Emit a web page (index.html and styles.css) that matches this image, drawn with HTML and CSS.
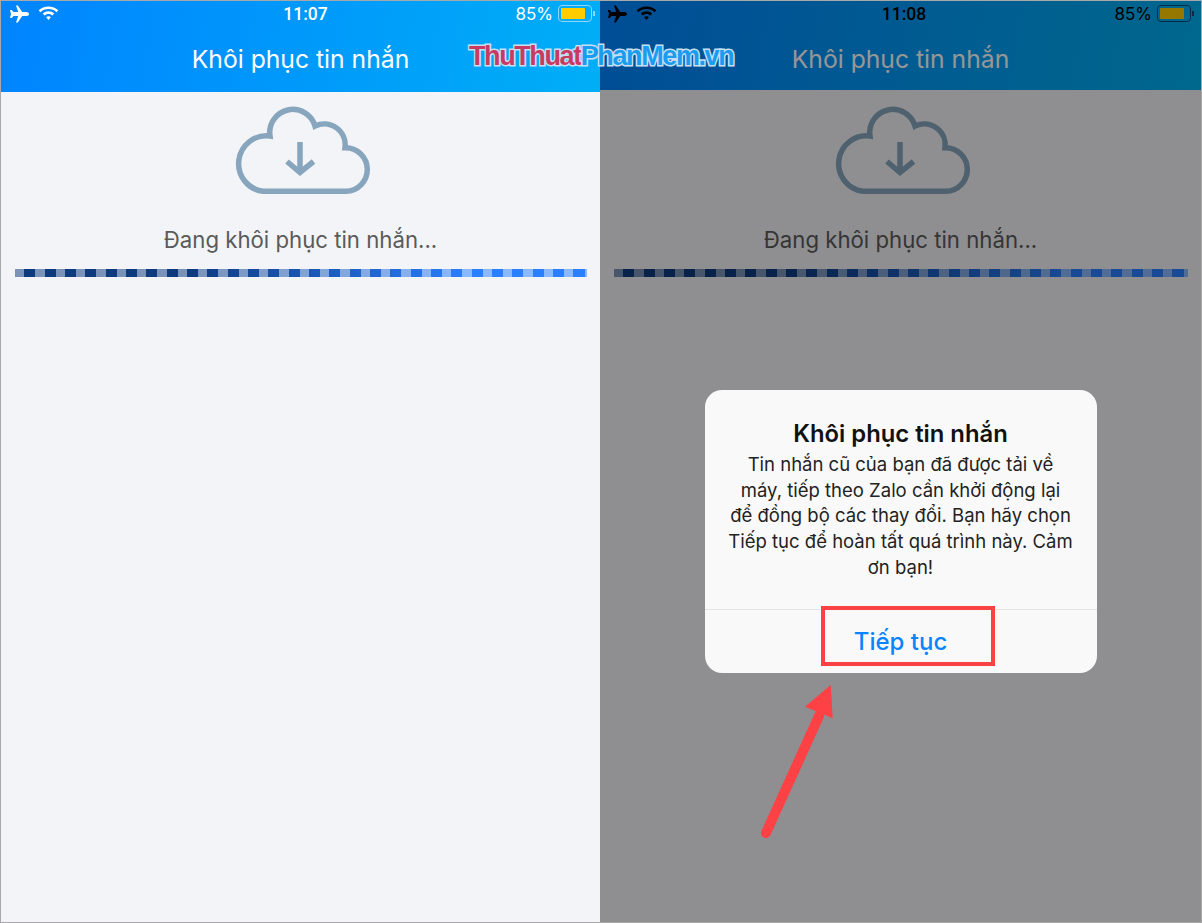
FILE: index.html
```html
<!DOCTYPE html>
<html lang="vi">
<head>
  <meta charset="UTF-8">
  <title>Khôi phục tin nhắn</title>
  <link rel="stylesheet" href="styles.css">
</head>
<body>
  <div class="frame">
    <div class="phone phone_left">
      <div class="header">
        <div class="status">
          <div class="status_left">
            <svg class="plane" viewBox="0 0 20 18"><path d="M7 .5h1.8L13.2 7h4.3C19 7 20 8 20 9s-1 2-2.500 2h-4.300L8.800 17.500H7L9.200 11H4.500L2.700 13H1L2 9 1 5h1.700L4.500 7h4.700z"/></svg>
            <svg class="wifi" viewBox="0 0 22 16"><path d="M11 .5c4 0 7.800 1.500 10.500 4.100l-1.900 2C17.400 4.500 14.300 3.200 11 3.200S4.600 4.500 2.400 6.600L.5 4.600C3.200 2 7 .5 11 .5zM11 5.700c2.300 0 4.500.9 6.100 2.400l-1.900 2C14.100 9 12.600 8.400 11 8.400S7.900 9 6.800 10.100l-1.900-2C6.500 6.600 8.700 5.700 11 5.700zM11 11c1 0 1.900.4 2.500 1L11 15l-2.500-3c.6-.6 1.500-1 2.500-1z"/></svg>
          </div>
          <div class="time">11:07</div>
          <div class="status_right">
            <span>85%</span>
            <div class="battery"><div class="battery_fill"></div></div>
            <div class="battery_tip"></div>
          </div>
        </div>
        <div class="title">Khôi phục tin nhắn</div>
      </div>
      <div class="content">
        <svg class="cloud" viewBox="0 0 146 100"><path class="cloud_line" d="M33 91.300H116A21.800 21.800 0 0 0 115 47.700A21 21 0 0 0 85 26A23.100 23.100 0 0 0 40 36A27.800 27.800 0 0 0 33 91.300z"/><path class="cloud_line" d="M70 42V71M57 61.500L70 72.500 83.500 61.500"/></svg>
        <div class="loading">Đang khôi phục tin nhắn...</div>
        <div class="bar"></div>
      </div>
    </div>

    <div class="phone phone_right">
      <div class="header">
        <div class="status">
          <div class="status_left">
            <svg class="plane" viewBox="0 0 20 18"><path d="M7 .5h1.8L13.2 7h4.3C19 7 20 8 20 9s-1 2-2.500 2h-4.300L8.800 17.500H7L9.200 11H4.500L2.700 13H1L2 9 1 5h1.700L4.500 7h4.700z"/></svg>
            <svg class="wifi" viewBox="0 0 22 16"><path d="M11 .5c4 0 7.800 1.500 10.500 4.100l-1.900 2C17.400 4.500 14.300 3.200 11 3.200S4.600 4.500 2.400 6.600L.5 4.600C3.200 2 7 .5 11 .5zM11 5.700c2.300 0 4.500.9 6.100 2.400l-1.900 2C14.100 9 12.600 8.400 11 8.400S7.900 9 6.800 10.100l-1.900-2C6.500 6.600 8.700 5.700 11 5.700zM11 11c1 0 1.900.4 2.500 1L11 15l-2.500-3c.6-.6 1.500-1 2.500-1z"/></svg>
          </div>
          <div class="time">11:08</div>
          <div class="status_right">
            <span>85%</span>
            <div class="battery"><div class="battery_fill"></div></div>
            <div class="battery_tip"></div>
          </div>
        </div>
        <div class="title">Khôi phục tin nhắn</div>
      </div>
      <div class="content">
        <svg class="cloud" viewBox="0 0 146 100"><path class="cloud_line" d="M33 91.300H116A21.800 21.800 0 0 0 115 47.700A21 21 0 0 0 85 26A23.100 23.100 0 0 0 40 36A27.800 27.800 0 0 0 33 91.300z"/><path class="cloud_line" d="M70 42V71M57 61.500L70 72.500 83.500 61.500"/></svg>
        <div class="loading">Đang khôi phục tin nhắn...</div>
        <div class="bar"></div>
      </div>

      <div class="dim">
        <div class="alert">
          <div class="alert_title">Khôi phục tin nhắn</div>
          <div class="alert_text">Tin nhắn cũ của bạn đã được tải về<br>máy, tiếp theo Zalo cần khởi động lại<br>để đồng bộ các thay đổi. Bạn hãy chọn<br>Tiếp tục để hoàn tất quá trình này. Cảm<br>ơn bạn!</div>
          <div class="alert_button">Tiếp tục</div>
          <div class="highlight"></div>
        </div>
      </div>

      <svg class="arrow" viewBox="0 0 90 160"><path class="arrow_line" d="M6 149L59 32"/><path class="arrow_head" d="M70.700 1L72.700 34.300 45 22.700z"/></svg>
    </div>

    <div class="watermark"><span class="wm_red">ThuThuat</span><span class="wm_blue">PhanMem.vn</span></div>
  </div>
</body>
</html>
```
FILE: styles.css
```css
html, body{
  margin: 0;
  padding: 0;
}
body{
  font-family: "Inter", "Roboto", sans-serif;
  background-color: #f3f4f7;
}
.frame{
  position: relative;
  display: flex;
  box-sizing: border-box;
  width: 1202px;
  height: 923px;
  border: 1px solid #a8a8a8;
  overflow: hidden;
}
.phone{
  position: relative;
  display: flex;
  flex-direction: column;
  background-color: #f3f4f7;
}
.phone_left{
  width: 599px;
}
.phone_right{
  width: 601px;
}
.header{
  height: 91px;
  color: white;
  background: linear-gradient(100deg, #0084ff, #00aef6);
}
.phone_right .header{
  height: 89px;
  background: linear-gradient(100deg, #0084ff, #00b0f0);
}
.status{
  display: grid;
  grid-template-columns: 1fr auto 1fr;
  align-items: center;
  height: 25px;
  padding: 0 5px 0 8px;
}
.phone_right .status{
  padding: 0 7px 0 7px;
}
.status_left{
  display: flex;
  align-items: center;
  gap: 9px;
}
.status_right{
  display: flex;
  align-items: center;
  justify-content: flex-end;
  gap: 5px;
  font-size: 17px;
}
.plane{
  width: 20px;
  height: 18px;
  fill: white;
}
.wifi{
  width: 21px;
  height: 15px;
  fill: white;
}
.time{
  margin-left: 7px;
  font-family: "Roboto", sans-serif;
  font-size: 17.5px;
  font-weight: 500;
}
.battery{
  box-sizing: border-box;
  width: 34px;
  height: 17px;
  padding: 2px;
  border: 1px solid #8fd6fb;
  border-radius: 4px;
}
.battery_fill{
  width: 24px;
  height: 11px;
  background-color: #ffcc00;
  border-radius: 1px;
}
.battery_tip{
  width: 2px;
  height: 5px;
  margin-left: -4px;
  background-color: #8fd6fb;
}
.phone_right .status_right, .phone_right .time{
  color: black;
}
.phone_right .plane, .phone_right .wifi{
  fill: black;
}
.phone_right .battery{
  border-color: #0a4a7a;
}
.phone_right .battery_tip{
  background-color: #0a4a7a;
}
.title{
  margin-top: 17px;
  text-align: center;
  font-size: 24.7px;
  line-height: 32px;
}
.content{
  display: flex;
  flex-direction: column;
  align-items: center;
}
.cloud{
  width: 146px;
  height: 100px;
  margin: 8px 0 0 5px;
}
.phone_right .cloud{
  margin-top: 10px;
}
.cloud_line{
  fill: none;
  stroke: #87a5bd;
  stroke-width: 5.5;
}
.loading{
  margin-top: 25px;
  font-size: 22.2px;
  line-height: 30px;
  color: #5a5a5a;
}
.bar{
  align-self: stretch;
  height: 8px;
  margin: 14px 13px 0 14px;
  background:
    repeating-linear-gradient(90deg, rgba(255,255,255,.45) 0, rgba(255,255,255,.45) 9.3px, transparent 9.3px, transparent 20.34px),
    linear-gradient(90deg, #0e3a7e, #0e3a7e 30%, #2a7fff 80%);
}
.dim{
  position: absolute;
  top: 0;
  left: 0;
  right: 0;
  bottom: 0;
  display: flex;
  justify-content: center;
  align-items: flex-start;
  padding-top: 389px;
  background-color: rgba(0,0,0,.41);
}
.alert{
  position: relative;
  display: flex;
  flex-direction: column;
  box-sizing: border-box;
  width: 392px;
  height: 283px;
  padding-top: 29px;
  background-color: #f9f9f9;
  border-radius: 17px;
  text-align: center;
}
.alert_title{
  font-size: 23.8px;
  line-height: 30px;
  font-weight: 600;
  color: #111;
}
.alert_text{
  margin-top: 3px;
  font-size: 18.5px;
  line-height: 25.7px;
  color: #222;
}
.alert_button{
  margin-top: 28px;
  border-top: 1px solid #e4e4e6;
  font-size: 24px;
  font-weight: 500;
  line-height: 64px;
  color: #0a84ff;
}
.highlight{
  position: absolute;
  left: 116px;
  top: 216px;
  box-sizing: border-box;
  width: 174px;
  height: 60px;
  border: 4px solid #fd4144;
}
.arrow{
  position: absolute;
  left: 160px;
  top: 683px;
  width: 90px;
  height: 160px;
}
.arrow_line{
  fill: none;
  stroke: #fd4144;
  stroke-width: 10;
  stroke-linecap: round;
}
.arrow_head{
  fill: #fd4144;
}
.watermark{
  position: absolute;
  left: 468px;
  top: 39px;
  font-family: "Liberation Sans", sans-serif;
  font-weight: bold;
  font-size: 27px;
  line-height: 32px;
  letter-spacing: -1.4px;
  white-space: nowrap;
  -webkit-text-stroke: 3px #c7dff2;
  paint-order: stroke fill;
}
.wm_red{
  color: #c93a62;
}
.wm_blue{
  color: #1a9cf0;
}
```
